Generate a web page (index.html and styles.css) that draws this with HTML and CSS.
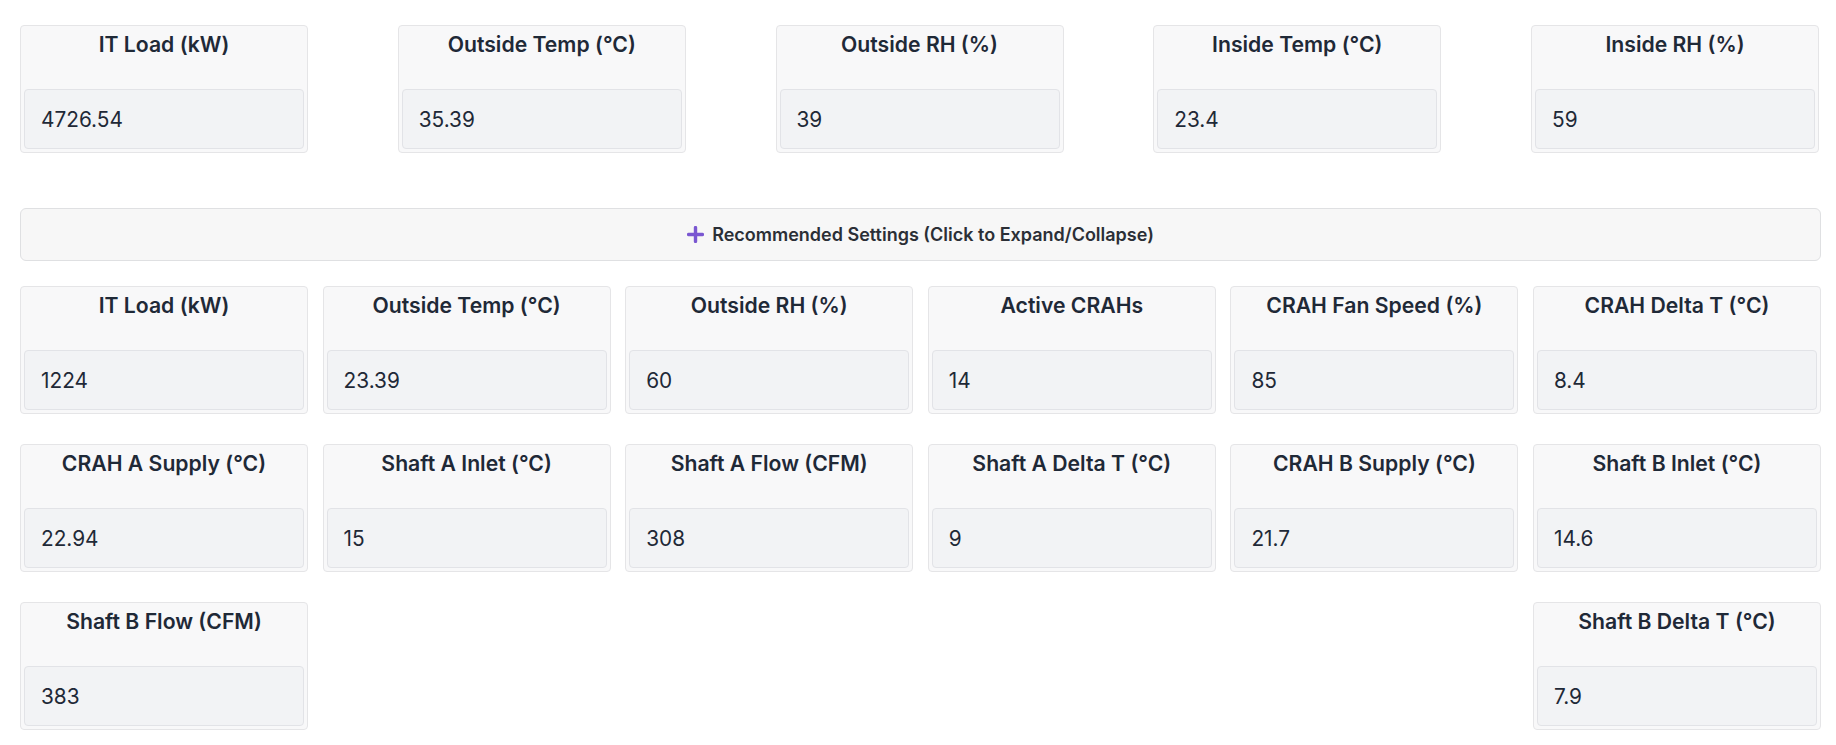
FILE: index.html
```html
<!DOCTYPE html>
<html lang="en">
<head>
<meta charset="utf-8">
<title>Settings</title>
<link rel="stylesheet" href="styles.css">
</head>
<body>
<main class="page">
  <section class="top-row">
    <div class="card"><div class="card-title">IT Load (kW)</div><div class="card-value">4726.54</div></div>
    <div class="card"><div class="card-title">Outside Temp (°C)</div><div class="card-value">35.39</div></div>
    <div class="card"><div class="card-title">Outside RH (%)</div><div class="card-value">39</div></div>
    <div class="card"><div class="card-title">Inside Temp (°C)</div><div class="card-value">23.4</div></div>
    <div class="card"><div class="card-title">Inside RH (%)</div><div class="card-value">59</div></div>
  </section>

  <button class="toggle" type="button">
    <svg class="plus" viewBox="0 0 16 16" width="17" height="17" aria-hidden="true"><path d="M8 1.5v13M1.5 8h13" stroke="#7a57d1" stroke-width="3.2" stroke-linecap="round"/></svg>
    <span>Recommended Settings (Click to Expand/Collapse)</span>
  </button>

  <section class="grid">
    <div class="card"><div class="card-title">IT Load (kW)</div><div class="card-value">1224</div></div>
    <div class="card"><div class="card-title">Outside Temp (°C)</div><div class="card-value">23.39</div></div>
    <div class="card"><div class="card-title">Outside RH (%)</div><div class="card-value">60</div></div>
    <div class="card"><div class="card-title">Active CRAHs</div><div class="card-value">14</div></div>
    <div class="card"><div class="card-title">CRAH Fan Speed (%)</div><div class="card-value">85</div></div>
    <div class="card"><div class="card-title">CRAH Delta T (°C)</div><div class="card-value">8.4</div></div>
    <div class="card"><div class="card-title">CRAH A Supply (°C)</div><div class="card-value">22.94</div></div>
    <div class="card"><div class="card-title">Shaft A Inlet (°C)</div><div class="card-value">15</div></div>
    <div class="card"><div class="card-title">Shaft A Flow (CFM)</div><div class="card-value">308</div></div>
    <div class="card"><div class="card-title">Shaft A Delta T (°C)</div><div class="card-value">9</div></div>
    <div class="card"><div class="card-title">CRAH B Supply (°C)</div><div class="card-value">21.7</div></div>
    <div class="card"><div class="card-title">Shaft B Inlet (°C)</div><div class="card-value">14.6</div></div>
    <div class="card"><div class="card-title">Shaft B Flow (CFM)</div><div class="card-value">383</div></div>
    <div class="card"><div class="card-title">Shaft B Delta T (°C)</div><div class="card-value">7.9</div></div>
  </section>
</main>
</body>
</html>
```

FILE: styles.css
```css
* { box-sizing: border-box; }

html, body {
  margin: 0;
  background: #ffffff;
}

body {
  font-family: Inter, "Noto Sans", "Liberation Sans", sans-serif;
  color: #1f2937;
}

.page {
  padding: 25px 15px 0 20px;
}

.top-row {
  display: flex;
  justify-content: space-between;
  padding-right: 2px;
}

.card {
  width: 288px;
  height: 128px;
  display: flex;
  flex-direction: column;
  padding: 3px;
  background: #f8f8f9;
  border: 1px solid #e5e5e7;
  border-radius: 4px;
}

.card-title {
  height: 60px;
  padding-top: 3px;
  text-align: center;
  font-size: 21.2px;
  line-height: 24px;
  font-weight: 600;
  color: #1f2937;
}

.card-value {
  flex: 1;
  display: flex;
  align-items: center;
  padding: 0 16px;
  background: #f2f3f5;
  border: 1px solid #e2e3e7;
  border-radius: 4px;
  font-size: 20.8px;
  font-weight: 400;
  color: #1f2937;
}

.toggle {
  display: flex;
  align-items: center;
  justify-content: center;
  gap: 8px;
  width: 100%;
  height: 53px;
  margin-top: 55px;
  padding: 0;
  background: #f7f7f7;
  border: 1px solid #dfe0e2;
  border-radius: 6px;
  font-family: inherit;
  font-size: 18px;
  font-weight: 600;
  color: #2b2f36;
  cursor: pointer;
}

.plus {
  display: block;
  flex: none;
}

.grid {
  display: flex;
  flex-wrap: wrap;
  justify-content: space-between;
  row-gap: 30px;
  margin-top: 25px;
}
```
